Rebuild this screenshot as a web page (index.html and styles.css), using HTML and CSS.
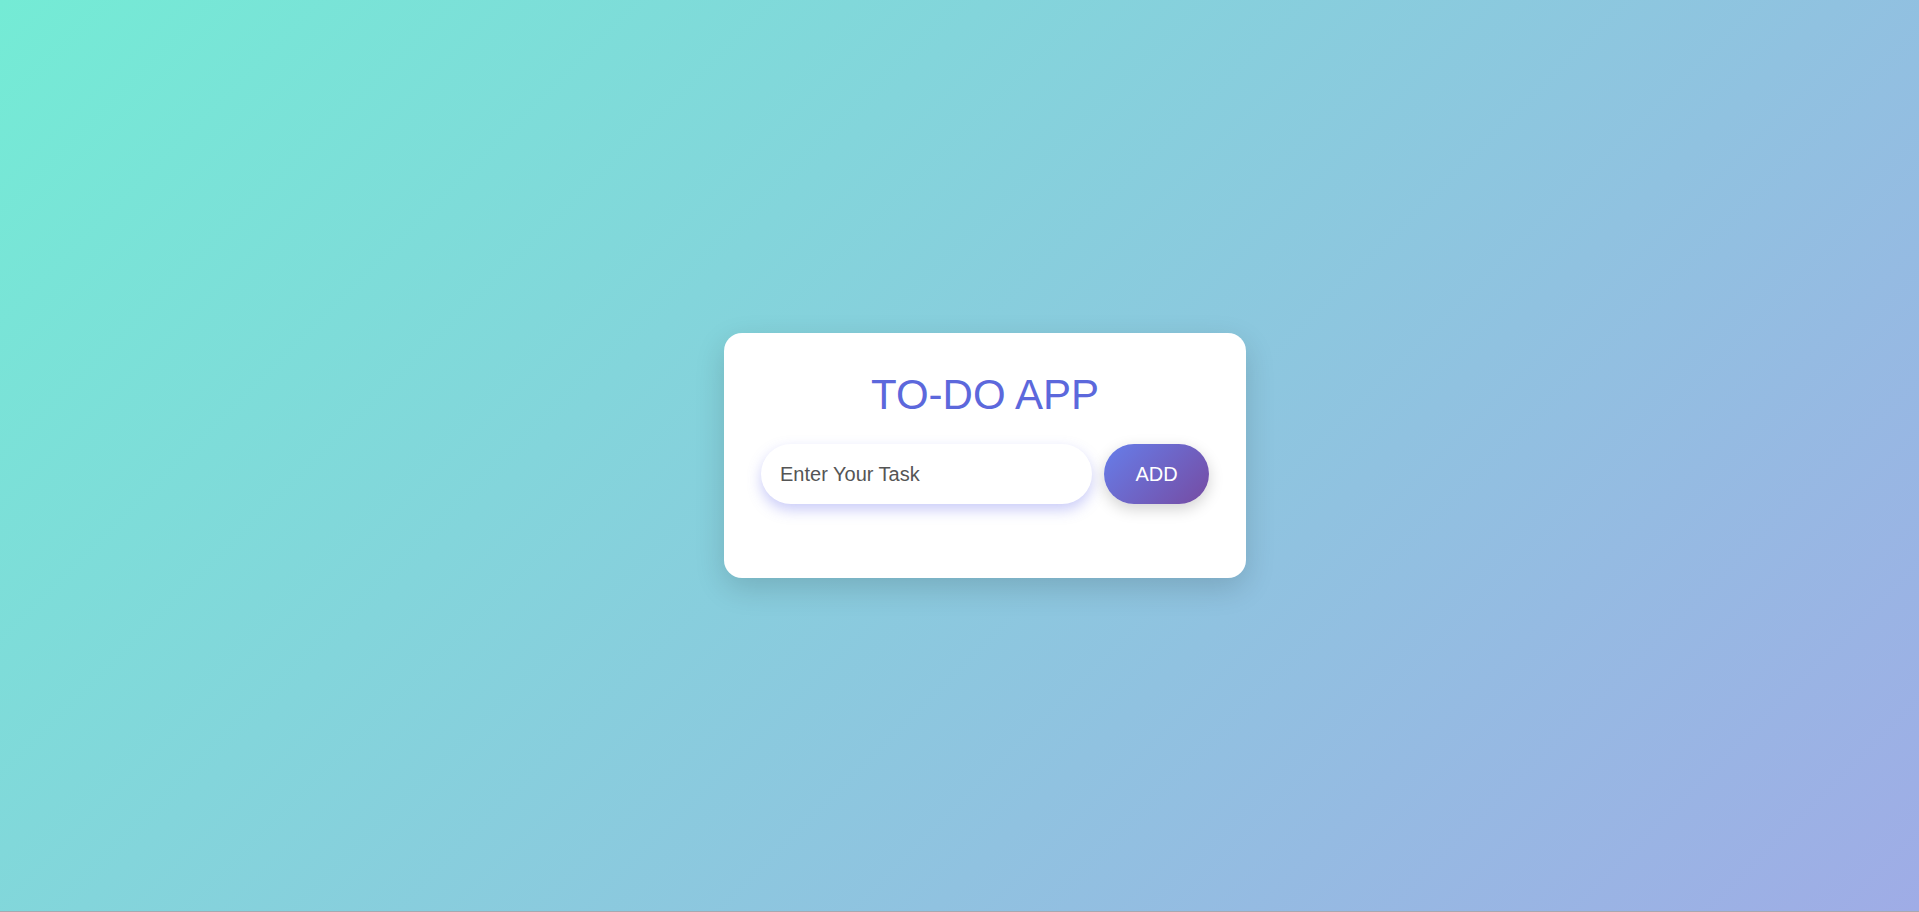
FILE: index.html
```html
<!DOCTYPE html>
<html lang="en">
<head>
<meta charset="UTF-8">
<title>To-Do App</title>
<link rel="stylesheet" href="styles.css">
</head>
<body>
  <main class="card">
    <h1 class="title">TO-DO APP</h1>
    <div class="row">
      <input class="task-input" type="text" placeholder="Enter Your Task">
      <button class="add-btn" type="button">ADD</button>
    </div>
    <ul class="list"></ul>
  </main>
</body>
</html>
```
FILE: styles.css
```css
* { box-sizing: border-box; }

html, body { height: 100%; }

body {
  margin: 0;
  height: 100vh;
  display: flex;
  align-items: center;
  justify-content: center;
  background: linear-gradient(135deg, #74ebd5 0%, #9face6 100%);
  border-bottom: 1px solid #a8a8b0;
  font-family: "Liberation Sans", Arial, sans-serif;
}

.card {
  width: 522px;
  margin-left: 51px;
  padding: 38px 37px 74px;
  background: #fff;
  border-radius: 18px;
  box-shadow: 0 10px 30px rgba(0, 0, 0, 0.15);
}

.title {
  margin: 0;
  font-size: 42px;
  line-height: 48px;
  font-weight: 400;
  text-align: center;
  color: #5c68dc;
}

.row {
  margin-top: 25px;
  display: flex;
  gap: 12px;
}

.task-input {
  width: 331px;
  height: 60px;
  padding: 0 19px;
  border: none;
  outline: none;
  border-radius: 30px;
  background: #fff;
  font-family: inherit;
  font-size: 20px;
  color: #555;
  box-shadow: 0 6px 14px rgba(102, 110, 234, 0.35);
}

.task-input::placeholder { color: #555; }

.add-btn {
  width: 105px;
  height: 60px;
  border: none;
  border-radius: 30px;
  background: linear-gradient(135deg, #667eea 0%, #764ba2 100%);
  color: #fff;
  font-family: inherit;
  font-size: 20px;
  cursor: pointer;
  box-shadow: 0 5px 15px rgba(0, 0, 0, 0.18);
}

.list { margin: 0; padding: 0; list-style: none; }
```
